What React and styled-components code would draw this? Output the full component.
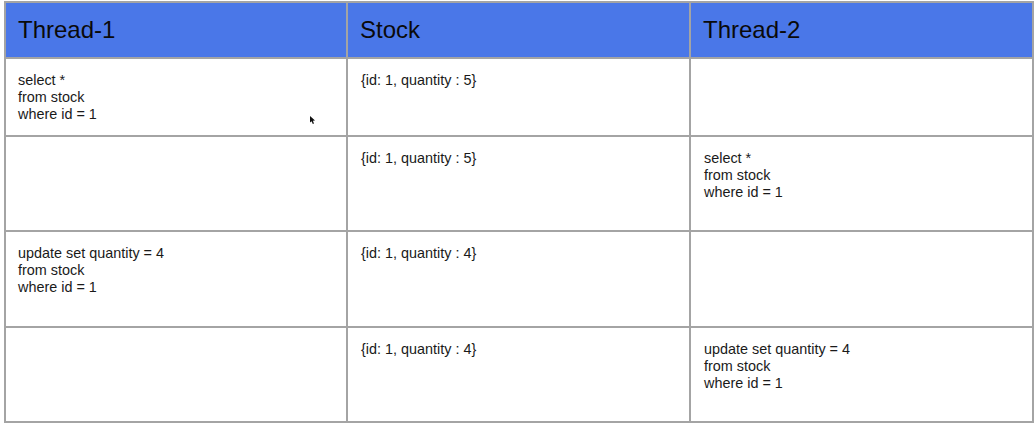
import React from 'react';
import styled, { createGlobalStyle } from 'styled-components';

const GlobalStyle = createGlobalStyle`
  html, body {
    margin: 0;
    padding: 0;
    background: #ffffff;
  }
  body {
    font-family: "Liberation Sans", Arial, sans-serif;
  }
`;

const Page = styled.div`
  position: relative;
  width: 1036px;
  height: 426px;
  padding: 1px 0 0 4px;
  box-sizing: border-box;
  background: #ffffff;
`;

const Table = styled.div`
  display: grid;
  grid-template-columns: 340px 341px 341px;
  grid-template-rows: 54px 76px 93px 94px 93px;
  gap: 2px;
  padding: 2px;
  width: max-content;
  background: #a4a4a4;
`;

const HeadCell = styled.div`
  display: flex;
  align-items: center;
  padding: 0 0 0 12px;
  background: #4a77e8;
  color: #0a0a0a;
  font-size: 24px;
`;

const Cell = styled.div`
  padding: ${p => (p.$mid ? '13px 13px' : '13px 12px')};
  background: #ffffff;
  color: #1a1a1a;
  font-size: 14.4px;
  line-height: 17px;
  white-space: pre-line;
`;

const Cursor = styled.svg`
  position: absolute;
  left: 309px;
  top: 115px;
`;

const headers = ['Thread-1', 'Stock', 'Thread-2'];

const rows = [
  ['select *\nfrom stock\nwhere id = 1', '{id: 1, quantity : 5}', ''],
  ['', '{id: 1, quantity : 5}', 'select *\nfrom stock\nwhere id = 1'],
  ['update set quantity = 4\nfrom stock\nwhere id = 1', '{id: 1, quantity : 4}', ''],
  ['', '{id: 1, quantity : 4}', 'update set quantity = 4\nfrom stock\nwhere id = 1'],
];

export default function App() {
  return (
    <>
      <GlobalStyle />
      <Page>
        <Table>
          {headers.map(h => (
            <HeadCell key={h}>{h}</HeadCell>
          ))}
          {rows.map((row, i) =>
            row.map((text, j) => (
              <Cell key={`${i}-${j}`} $mid={j > 0}>
                {text}
              </Cell>
            ))
          )}
        </Table>
        <Cursor width="7" height="10" viewBox="0 0 7 10">
          <path d="M1 1 L1 7.5 L2.6 6.2 L3.8 9 L5 8.4 L3.9 5.8 L6 5.6 Z" fill="#111" />
        </Cursor>
      </Page>
    </>
  );
}
